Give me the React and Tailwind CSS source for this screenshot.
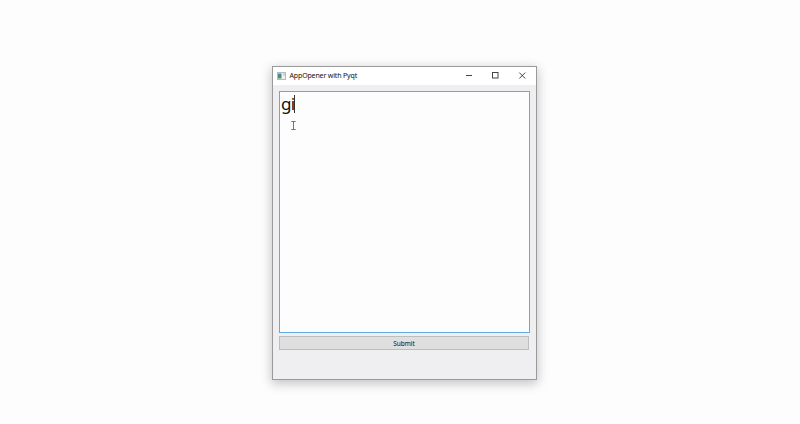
function AppIcon() {
  return (
    <svg width="9" height="8" viewBox="0 0 9 8" className="block shrink-0">
      <rect x="0.5" y="0.5" width="8" height="7" fill="#f0f2f4" stroke="#b4babe" />
      <rect x="1" y="1.5" width="3.5" height="2.5" fill="#4a86b0" />
      <rect x="1" y="4" width="3.5" height="2.5" fill="#4b8f62" />
      <rect x="6" y="1.5" width="2" height="2" fill="#c3c9d2" />
    </svg>
  );
}

function TitleBar() {
  return (
    <header className="flex h-[18px] shrink-0 items-center bg-white pl-[4px] pr-[10px]">
      <AppIcon />
      <h1 className="ml-[3.5px] grow whitespace-nowrap text-[7px] leading-[18px] tracking-[-0.15px] text-[#111]">
        AppOpener with Pyqt
      </h1>
      <svg width="60" height="8" viewBox="0 0 60 8" className="block" fill="none" stroke="#444">
        <path d="M0 3.5H6" />
        <rect x="26.5" y="0.5" width="5.5" height="5.5" />
        <path d="M53.3 0.6L59.2 6.5M59.2 0.6L53.3 6.5" strokeWidth="1" />
      </svg>
    </header>
  );
}

function PointerBeam() {
  return (
    <svg width="5" height="9" viewBox="0 0 5 9" className="absolute left-[11px] top-[29px]" fill="none" stroke="#666" strokeWidth="0.9">
      <path d="M0.3 0.5H4.7M2.5 0.5V8.5M0.3 8.5H4.7" />
    </svg>
  );
}

export default function App() {
  return (
    <main className="flex h-[424px] w-[800px] items-start bg-[#fefdfe] pl-[272px] pt-[66px] font-['Noto_Sans','Open_Sans',sans-serif]">
      <section className="flex h-[314px] w-[265px] flex-col border border-[#9a9a9a] bg-[#efeef0] shadow-[0_3px_10px_1px_rgba(0,0,0,0.22)]">
        <TitleBar />
        <div className="flex flex-col px-[6px] pt-[6px]">
          <div className="relative h-[242px] w-[251px] border border-[#64a9e0] bg-[#fefdfe] pl-[1px]">
            <div className="flex items-center text-[17px] leading-[24px] tracking-[-0.7px] text-[#111]">
              <span>gi</span>
              <span className="h-[18px] w-px bg-[#333]" />
            </div>
            <PointerBeam />
          </div>
          <button className="mt-[3px] h-[14px] w-[250px] border border-[#bdbdbd] bg-[#dfdfdf] text-center text-[6.5px] leading-[13px] text-[#111]">
            Submit
          </button>
        </div>
      </section>
    </main>
  );
}
